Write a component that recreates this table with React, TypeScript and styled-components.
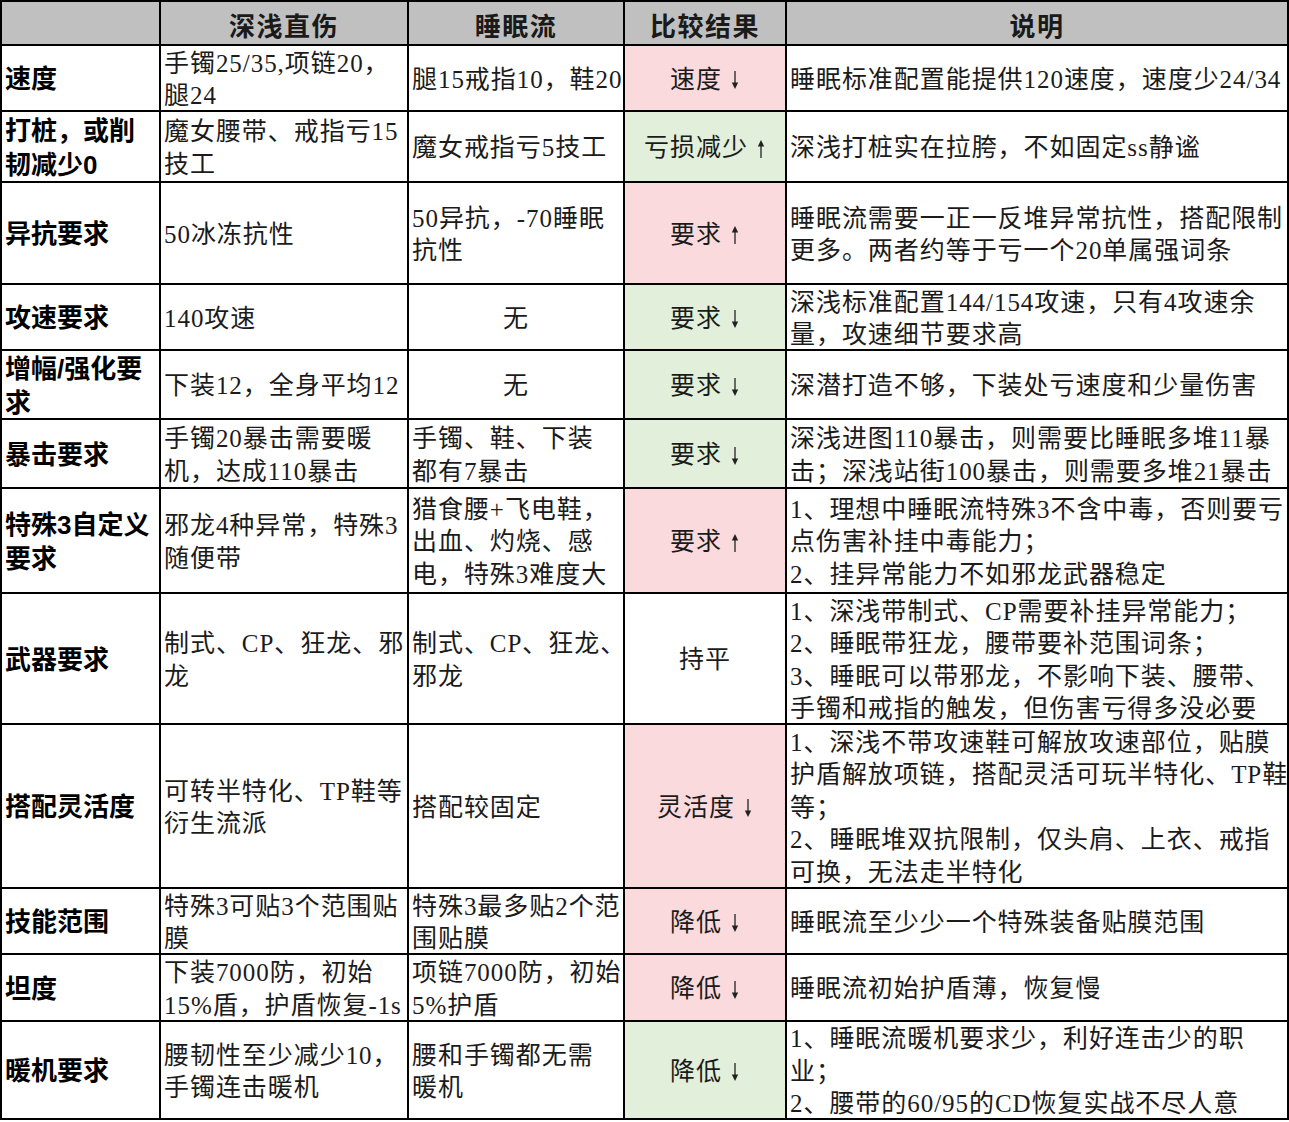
import React from "react";
import styled, { createGlobalStyle } from "styled-components";

const Global = createGlobalStyle`
  html, body { margin: 0; padding: 0; background: #ffffff; }
  body { font-family: "Liberation Serif", "Noto Sans CJK SC", serif; }
`;

type Tone = "pink" | "green" | "white";

interface Row {
  h: number;
  name: string[];
  a: string[];
  b: string[];
  bCenter?: boolean;
  result: string;
  arrow?: "up" | "down";
  tone: Tone;
  note: string[];
}

const rows: Row[] = [
  { h: 64, name: ["速度"], a: ["手镯25/35,项链20，", "腿24"], b: ["腿15戒指10，鞋20"], result: "速度", arrow: "down", tone: "pink", note: ["睡眠标准配置能提供120速度，速度少24/34"] },
  { h: 69, name: ["打桩，或削", "韧减少0"], a: ["魔女腰带、戒指亏15", "技工"], b: ["魔女戒指亏5技工"], result: "亏损减少", arrow: "up", tone: "green", note: ["深浅打桩实在拉胯，不如固定ss静谧"] },
  { h: 100, name: ["异抗要求"], a: ["50冰冻抗性"], b: ["50异抗，-70睡眠", "抗性"], result: "要求", arrow: "up", tone: "pink", note: ["睡眠流需要一正一反堆异常抗性，搭配限制", "更多。两者约等于亏一个20单属强词条"] },
  { h: 64, name: ["攻速要求"], a: ["140攻速"], b: ["无"], bCenter: true, result: "要求", arrow: "down", tone: "green", note: ["深浅标准配置144/154攻速，只有4攻速余", "量，攻速细节要求高"] },
  { h: 67, name: ["增幅/强化要", "求"], a: ["下装12，全身平均12"], b: ["无"], bCenter: true, result: "要求", arrow: "down", tone: "green", note: ["深潜打造不够，下装处亏速度和少量伤害"] },
  { h: 67, name: ["暴击要求"], a: ["手镯20暴击需要暖", "机，达成110暴击"], b: ["手镯、鞋、下装", "都有7暴击"], result: "要求", arrow: "down", tone: "green", note: ["深浅进图110暴击，则需要比睡眠多堆11暴", "击；深浅站街100暴击，则需要多堆21暴击"] },
  { h: 103, name: ["特殊3自定义", "要求"], a: ["邪龙4种异常，特殊3", "随便带"], b: ["猎食腰+飞电鞋，", "出血、灼烧、感", "电，特殊3难度大"], result: "要求", arrow: "up", tone: "pink", note: ["1、理想中睡眠流特殊3不含中毒，否则要亏", "点伤害补挂中毒能力；", "2、挂异常能力不如邪龙武器稳定"] },
  { h: 129, name: ["武器要求"], a: ["制式、CP、狂龙、邪", "龙"], b: ["制式、CP、狂龙、", "邪龙"], result: "持平", tone: "white", note: ["1、深浅带制式、CP需要补挂异常能力；", "2、睡眠带狂龙，腰带要补范围词条；", "3、睡眠可以带邪龙，不影响下装、腰带、", "手镯和戒指的触发，但伤害亏得多没必要"] },
  { h: 162, name: ["搭配灵活度"], a: ["可转半特化、TP鞋等", "衍生流派"], b: ["搭配较固定"], result: "灵活度", arrow: "down", tone: "pink", note: ["1、深浅不带攻速鞋可解放攻速部位，贴膜", "护盾解放项链，搭配灵活可玩半特化、TP鞋", "等；", "2、睡眠堆双抗限制，仅头肩、上衣、戒指", "可换，无法走半特化"] },
  { h: 64, name: ["技能范围"], a: ["特殊3可贴3个范围贴", "膜"], b: ["特殊3最多贴2个范", "围贴膜"], result: "降低", arrow: "down", tone: "pink", note: ["睡眠流至少少一个特殊装备贴膜范围"] },
  { h: 65, name: ["坦度"], a: ["下装7000防，初始", "15%盾，护盾恢复-1s"], b: ["项链7000防，初始", "5%护盾"], result: "降低", arrow: "down", tone: "pink", note: ["睡眠流初始护盾薄，恢复慢"] },
  { h: 96, name: ["暖机要求"], a: ["腰韧性至少减少10，", "手镯连击暖机"], b: ["腰和手镯都无需", "暖机"], result: "降低", arrow: "down", tone: "green", note: ["1、睡眠流暖机要求少，利好连击少的职", "业；", "2、腰带的60/95的CD恢复实战不尽人意"] },
];

const toneColor: Record<Tone, string> = {
  pink: "#fadadd",
  green: "#e2efda",
  white: "#ffffff",
};

const Sheet = styled.div<{ $rows: string }>`
  display: grid;
  grid-template-columns: 157px 246px 214px 160px 500px;
  grid-template-rows: ${(p) => p.$rows};
  gap: 2px;
  padding: 2px;
  background: #000000;
  width: max-content;
`;

const HeadCell = styled.div`
  background: #c0c0c0;
  display: flex;
  align-items: center;
  justify-content: center;
  padding-top: 3px;
  font-family: "Liberation Serif", "Noto Sans CJK SC", serif;
  font-weight: 700;
  font-size: 26px;
  color: #1a1a1a;
  letter-spacing: 1.5px;
`;

const Cell = styled.div<{ $center?: boolean; $bg?: string }>`
  background: ${(p) => p.$bg || "#ffffff"};
  display: flex;
  flex-direction: column;
  justify-content: center;
  align-items: ${(p) => (p.$center ? "center" : "flex-start")};
  padding: 4px 3px 0;
  font-family: "Liberation Serif", "Noto Sans CJK SC", serif;
  font-size: 25px;
  letter-spacing: 0.95px;
  line-height: 32.5px;
  color: #1b1b1b;
  overflow: visible;
`;

const NameCell = styled(Cell)`
  font-family: "Liberation Sans", "Noto Sans CJK SC", sans-serif;
  font-weight: 700;
  font-size: 26px;
  letter-spacing: 0;
  line-height: 33.5px;
  color: #000000;
`;

const Line = styled.span`
  display: flex;
  align-items: center;
  white-space: nowrap;
`;

const Arrow = styled.svg`
  margin-left: 8px;
  width: 10px;
  height: 20px;
  flex: none;
`;

const Lines = ({ items }: { items: string[] }) => (
  <>
    {items.map((t, i) => (
      <Line key={i}>{t}</Line>
    ))}
  </>
);

const ArrowIcon = ({ dir }: { dir: "up" | "down" }) => (
  <Arrow viewBox="0 0 10 20">
    {dir === "down" ? (
      <>
        <line x1="5" y1="1" x2="5" y2="14" stroke="#222" strokeWidth="1.3" />
        <path d="M1.8 12.5 L5 19 L8.2 12.5 Z" fill="#222" />
      </>
    ) : (
      <>
        <line x1="5" y1="6" x2="5" y2="19" stroke="#222" strokeWidth="1.3" />
        <path d="M1.8 7.5 L5 1 L8.2 7.5 Z" fill="#222" />
      </>
    )}
  </Arrow>
);

export default function App() {
  const rowTemplate = ["42px", ...rows.map((r) => `${r.h}px`)].join(" ");
  return (
    <>
      <Global />
      <Sheet $rows={rowTemplate}>
        <HeadCell />
        <HeadCell>深浅直伤</HeadCell>
        <HeadCell>睡眠流</HeadCell>
        <HeadCell>比较结果</HeadCell>
        <HeadCell>说明</HeadCell>
        {rows.map((r, i) => (
          <React.Fragment key={i}>
            <NameCell>
              <Lines items={r.name} />
            </NameCell>
            <Cell>
              <Lines items={r.a} />
            </Cell>
            <Cell $center={r.bCenter}>
              <Lines items={r.b} />
            </Cell>
            <Cell $center $bg={toneColor[r.tone]}>
              <Line>
                {r.result}
                {r.arrow && <ArrowIcon dir={r.arrow} />}
              </Line>
            </Cell>
            <Cell>
              <Lines items={r.note} />
            </Cell>
          </React.Fragment>
        ))}
      </Sheet>
    </>
  );
}
